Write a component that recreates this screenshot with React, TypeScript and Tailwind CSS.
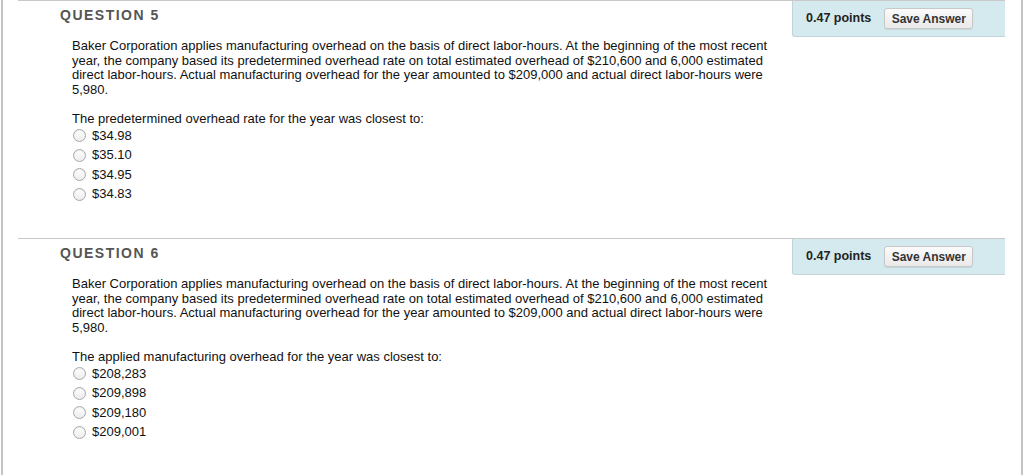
const body =
  'Baker Corporation applies manufacturing overhead on the basis of direct labor-hours. At the beginning of the most recent year, the company based its predetermined overhead rate on total estimated overhead of $210,600 and 6,000 estimated direct labor-hours. Actual manufacturing overhead for the year amounted to $209,000 and actual direct labor-hours were 5,980.'

const questions = [
  {
    num: 5,
    prompt: 'The predetermined overhead rate for the year was closest to:',
    options: ['$34.98', '$35.10', '$34.95', '$34.83'],
  },
  {
    num: 6,
    prompt: 'The applied manufacturing overhead for the year was closest to:',
    options: ['$208,283', '$209,898', '$209,180', '$209,001'],
  },
]

function Radio() {
  return (
    <span className="h-[13px] w-[13px] shrink-0 rounded-full border border-[#a9a9a9] bg-gradient-to-b from-[#ffffff] to-[#ececec] shadow-[inset_0_1px_1px_rgba(0,0,0,0.08)]" />
  )
}

function Question({ num, prompt, options }: { num: number; prompt: string; options: string[] }) {
  return (
    <section className="h-[238px] pl-[15px] pr-[16px]">
      <div className="flex border-t border-[#c9c9c9]">
        <div className="flex-1 pl-[42px] pt-[6px]">
          <h2 className="text-[14px] font-bold leading-[17px] tracking-[1.5px] text-[#555]">
            QUESTION {num}
          </h2>
        </div>
        <div className="flex h-[36px] w-[213px] items-center rounded-bl-[3px] border-b border-l border-[#c3d3d7] bg-[#d4eaee] pl-[13px]">
          <span className="text-[12.5px] font-bold text-[#222]">0.47 points</span>
          <button className="ml-[13px] h-[21px] w-[89px] rounded-[3px] border border-[#c8c8c8] bg-gradient-to-b from-[#fbfbfb] to-[#e9e9e9] text-[12px] font-bold text-[#333] shadow-[0_1px_1px_rgba(0,0,0,0.08)]">
            Save Answer
          </button>
        </div>
      </div>
      <div className="-mt-[36px] pl-[54px] pt-[38px] text-[13px] leading-[14.5px] text-[#111]">
        <p className="w-[706px]">{body}</p>
        <p className="mt-[15px]">{prompt}</p>
        <ul className="mt-[2px] flex flex-col gap-[5px]">
          {options.map((o) => (
            <li key={o} className="flex h-[14.5px] items-center gap-[6px] pl-[1px]">
              <Radio />
              <span>{o}</span>
            </li>
          ))}
        </ul>
      </div>
    </section>
  )
}

export default function App() {
  return (
    <div
      className="h-[475px] w-[1024px] overflow-hidden bg-white"
      style={{ fontFamily: '"Liberation Sans", Arial, sans-serif' }}
    >
      <div className="ml-[1px] h-full w-[1022px] border-l-2 border-r-2 border-[#c4c4c4]">
        {questions.map((q) => (
          <Question key={q.num} {...q} />
        ))}
      </div>
    </div>
  )
}
